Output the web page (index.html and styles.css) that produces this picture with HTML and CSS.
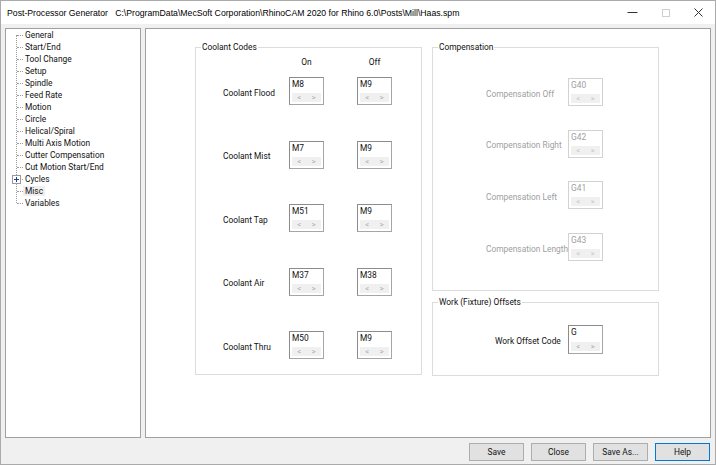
FILE: index.html
```html
<!DOCTYPE html>
<html lang="en">
<head>
<meta charset="UTF-8">
<title>Post-Processor Generator</title>
<link rel="stylesheet" href="styles.css">
</head>
<body>
<div class="window">
  <div class="titlebar">
    <span class="title">Post-Processor Generator   C:\ProgramData\MecSoft Corporation\RhinoCAM 2020 for Rhino 6.0\Posts\Mill\Haas.spm</span>
    <div class="controls">
      <span class="ctl"><svg width="11" height="11" viewBox="0 0 11 11"><path d="M0.5 5.5h10" stroke="#333" stroke-width="1"/></svg></span>
      <span class="ctl"><svg width="8" height="8" viewBox="0 0 8 8"><rect x="0.5" y="0.5" width="7" height="7" fill="none" stroke="#cfcfcf"/></svg></span>
      <span class="ctl"><svg width="9" height="9" viewBox="0 0 9 9"><path d="M0.5 0.5l8 8M8.5 0.5l-8 8" stroke="#333" stroke-width="1"/></svg></span>
    </div>
  </div>

  <div class="main">
    <div class="tree">
      <ul>
        <li>General</li>
        <li>Start/End</li>
        <li>Tool Change</li>
        <li>Setup</li>
        <li>Spindle</li>
        <li>Feed Rate</li>
        <li>Motion</li>
        <li>Circle</li>
        <li>Helical/Spiral</li>
        <li>Multi Axis Motion</li>
        <li>Cutter Compensation</li>
        <li>Cut Motion Start/End</li>
        <li class="has-kids"><span class="expander"><svg width="5" height="5" viewBox="0 0 5 5"><path d="M0 2.5h5M2.5 0v5" stroke="#1e3f8f" stroke-width="1"/></svg></span>Cycles</li>
        <li><span class="sel">Misc</span></li>
        <li>Variables</li>
      </ul>
    </div>

    <div class="page">
      <div class="group coolant">
        <span class="group-title">Coolant Codes</span>
        <div class="heads">
          <span class="colhead">On</span>
          <span class="colhead">Off</span>
        </div>
        <div class="rows">
          <span class="lbl">Coolant Flood</span>
          <div class="spin"><span class="val">M8</span><span class="arrows"><i>&lt;</i><i>&gt;</i></span></div>
          <div class="spin"><span class="val">M9</span><span class="arrows"><i>&lt;</i><i>&gt;</i></span></div>

          <span class="lbl">Coolant Mist</span>
          <div class="spin"><span class="val">M7</span><span class="arrows"><i>&lt;</i><i>&gt;</i></span></div>
          <div class="spin"><span class="val">M9</span><span class="arrows"><i>&lt;</i><i>&gt;</i></span></div>

          <span class="lbl">Coolant Tap</span>
          <div class="spin"><span class="val">M51</span><span class="arrows"><i>&lt;</i><i>&gt;</i></span></div>
          <div class="spin"><span class="val">M9</span><span class="arrows"><i>&lt;</i><i>&gt;</i></span></div>

          <span class="lbl">Coolant Air</span>
          <div class="spin"><span class="val">M37</span><span class="arrows"><i>&lt;</i><i>&gt;</i></span></div>
          <div class="spin"><span class="val">M38</span><span class="arrows"><i>&lt;</i><i>&gt;</i></span></div>

          <span class="lbl">Coolant Thru</span>
          <div class="spin"><span class="val">M50</span><span class="arrows"><i>&lt;</i><i>&gt;</i></span></div>
          <div class="spin"><span class="val">M9</span><span class="arrows"><i>&lt;</i><i>&gt;</i></span></div>
        </div>
      </div>

      <div class="side">
        <div class="group comp disabled">
          <span class="group-title">Compensation</span>
          <div class="rows">
            <span class="lbl">Compensation Off</span>
            <div class="spin"><span class="val">G40</span><span class="arrows"><i>&lt;</i><i>&gt;</i></span></div>
            <span class="lbl">Compensation Right</span>
            <div class="spin"><span class="val">G42</span><span class="arrows"><i>&lt;</i><i>&gt;</i></span></div>
            <span class="lbl">Compensation Left</span>
            <div class="spin"><span class="val">G41</span><span class="arrows"><i>&lt;</i><i>&gt;</i></span></div>
            <span class="lbl">Compensation Length</span>
            <div class="spin"><span class="val">G43</span><span class="arrows"><i>&lt;</i><i>&gt;</i></span></div>
          </div>
        </div>

        <div class="group work">
          <span class="group-title">Work (Fixture) Offsets</span>
          <div class="rows">
            <span class="lbl">Work Offset Code</span>
            <div class="spin"><span class="val">G</span><span class="arrows"><i>&lt;</i><i>&gt;</i></span></div>
          </div>
        </div>
      </div>
    </div>
  </div>

  <div class="buttons">
    <button class="btn">Save</button>
    <button class="btn">Close</button>
    <button class="btn">Save As...</button>
    <button class="btn default">Help</button>
  </div>
</div>
</body>
</html>
```

FILE: styles.css
```css
* {
  margin: 0;
  padding: 0;
  box-sizing: border-box;
}

body {
  width: 716px;
  height: 465px;
  overflow: hidden;
  background: #fff;
  font: 8.4px/12px Roboto, "Liberation Sans", Arial, sans-serif;
  color: #111;
}

.window {
  width: 716px;
  height: 465px;
  border: 1px solid #aaaaaa;
  background: #f0f0f0;
  display: flex;
  flex-direction: column;
}

/* title bar */
.titlebar {
  height: 23px;
  background: #fff;
  display: flex;
  align-items: center;
  padding-left: 6px;
  flex: none;
}

.title {
  flex: 1;
  white-space: pre;
  font: 8.7px/12px "Liberation Sans", Arial, sans-serif;
  margin-top: 1px;
  color: #000;
}

.controls {
  display: flex;
  height: 100%;
}

.ctl {
  width: 33px;
  display: flex;
  align-items: center;
  justify-content: center;
}

/* main area */
.main {
  flex: 1;
  display: flex;
  gap: 4px;
  padding: 4px 4px 0 4px;
  min-height: 0;
}

.tree, .page {
  height: 410px;
  background: #fff;
  border: 1px solid #a0a0a0;
}

.tree {
  width: 136px;
  flex: none;
}

.tree ul {
  list-style: none;
  position: relative;
}

.tree ul::before {
  content: "";
  position: absolute;
  left: 10px;
  top: 6px;
  bottom: 6px;
  border-left: 1px dotted #9a9a9a;
}

.tree li {
  position: relative;
  height: 12px;
  line-height: 12px;
  padding-left: 19px;
  white-space: nowrap;
}

.tree li::before {
  content: "";
  position: absolute;
  left: 11px;
  top: 6px;
  width: 6px;
  border-top: 1px dotted #9a9a9a;
}

.expander {
  position: absolute;
  left: 6px;
  top: 2px;
  width: 9px;
  height: 9px;
  border: 1px solid #9a9a9a;
  background: #fff;
  display: flex;
  align-items: center;
  justify-content: center;
  z-index: 1;
}

.sel {
  background: #efefef;
  padding: 0 2px;
  margin-left: -2px;
}

.page {
  flex: 1;
  display: flex;
  align-items: flex-start;
  gap: 10px;
  padding: 18px 0 0 49px;
}

/* group boxes */
.group {
  position: relative;
  border: 1px solid #dcdcdc;
  width: 227px;
}

.group-title {
  position: absolute;
  top: -7px;
  left: 5px;
  background: #fff;
  padding: 0 1px;
  line-height: 12px;
}

.coolant {
  height: 328px;
  padding: 8px 0 0 27px;
}

.heads {
  display: flex;
  padding-left: 66px;
  gap: 33px;
  margin-bottom: 9px;
}

.colhead {
  width: 35px;
  text-align: center;
  line-height: 12px;
}

.coolant .rows {
  display: grid;
  grid-template-columns: 66px 68px 35px;
  grid-auto-rows: 28px;
  row-gap: 35.5px;
  align-items: center;
}

.lbl {
  white-space: nowrap;
  padding-top: 3px;
}

.side {
  display: flex;
  flex-direction: column;
  gap: 11px;
}

.comp {
  height: 244px;
  padding: 30px 0 0 53px;
}

.comp .rows {
  display: grid;
  grid-template-columns: 82px 35px;
  grid-auto-rows: 28px;
  row-gap: 23.7px;
  align-items: center;
}

.work {
  height: 74px;
  padding: 22px 0 0 62px;
}

.work .rows {
  display: grid;
  grid-template-columns: 73px 35px;
  grid-auto-rows: 29px;
  align-items: center;
}

/* spin edit */
.spin {
  width: 35px;
  height: 28px;
  border: 1px solid #8c8c8c;
  border-right-color: #a6a6a6;
  border-bottom-color: #a6a6a6;
  background: #fff;
  display: flex;
  flex-direction: column;
  justify-content: space-between;
  padding: 1px;
}

.work .spin {
  height: 29px;
}

.val {
  line-height: 10px;
  padding-left: 1px;
}

.arrows {
  height: 9px;
  margin: 0 1px 1px;
  background: #f0f0f0;
  display: flex;
  justify-content: space-around;
  color: #a8a8a8;
  font-size: 7.5px;
  line-height: 9px;
}

.arrows i {
  font-style: normal;
}

.disabled .lbl,
.disabled .val {
  color: #a0a0a0;
}

.disabled .spin {
  border-color: #d2d2d2;
}

.disabled .arrows {
  color: #c4c4c4;
}

/* buttons */
.buttons {
  flex: none;
  display: flex;
  justify-content: flex-end;
  gap: 7px;
  padding: 5px 5px 3px 0;
}

.btn {
  width: 55px;
  height: 18px;
  font: 8.4px Roboto, "Liberation Sans", Arial, sans-serif;
  color: #111;
  background: #e1e1e1;
  border: 1px solid #adadad;
}

.btn.default {
  border-color: #0078d7;
}
```
